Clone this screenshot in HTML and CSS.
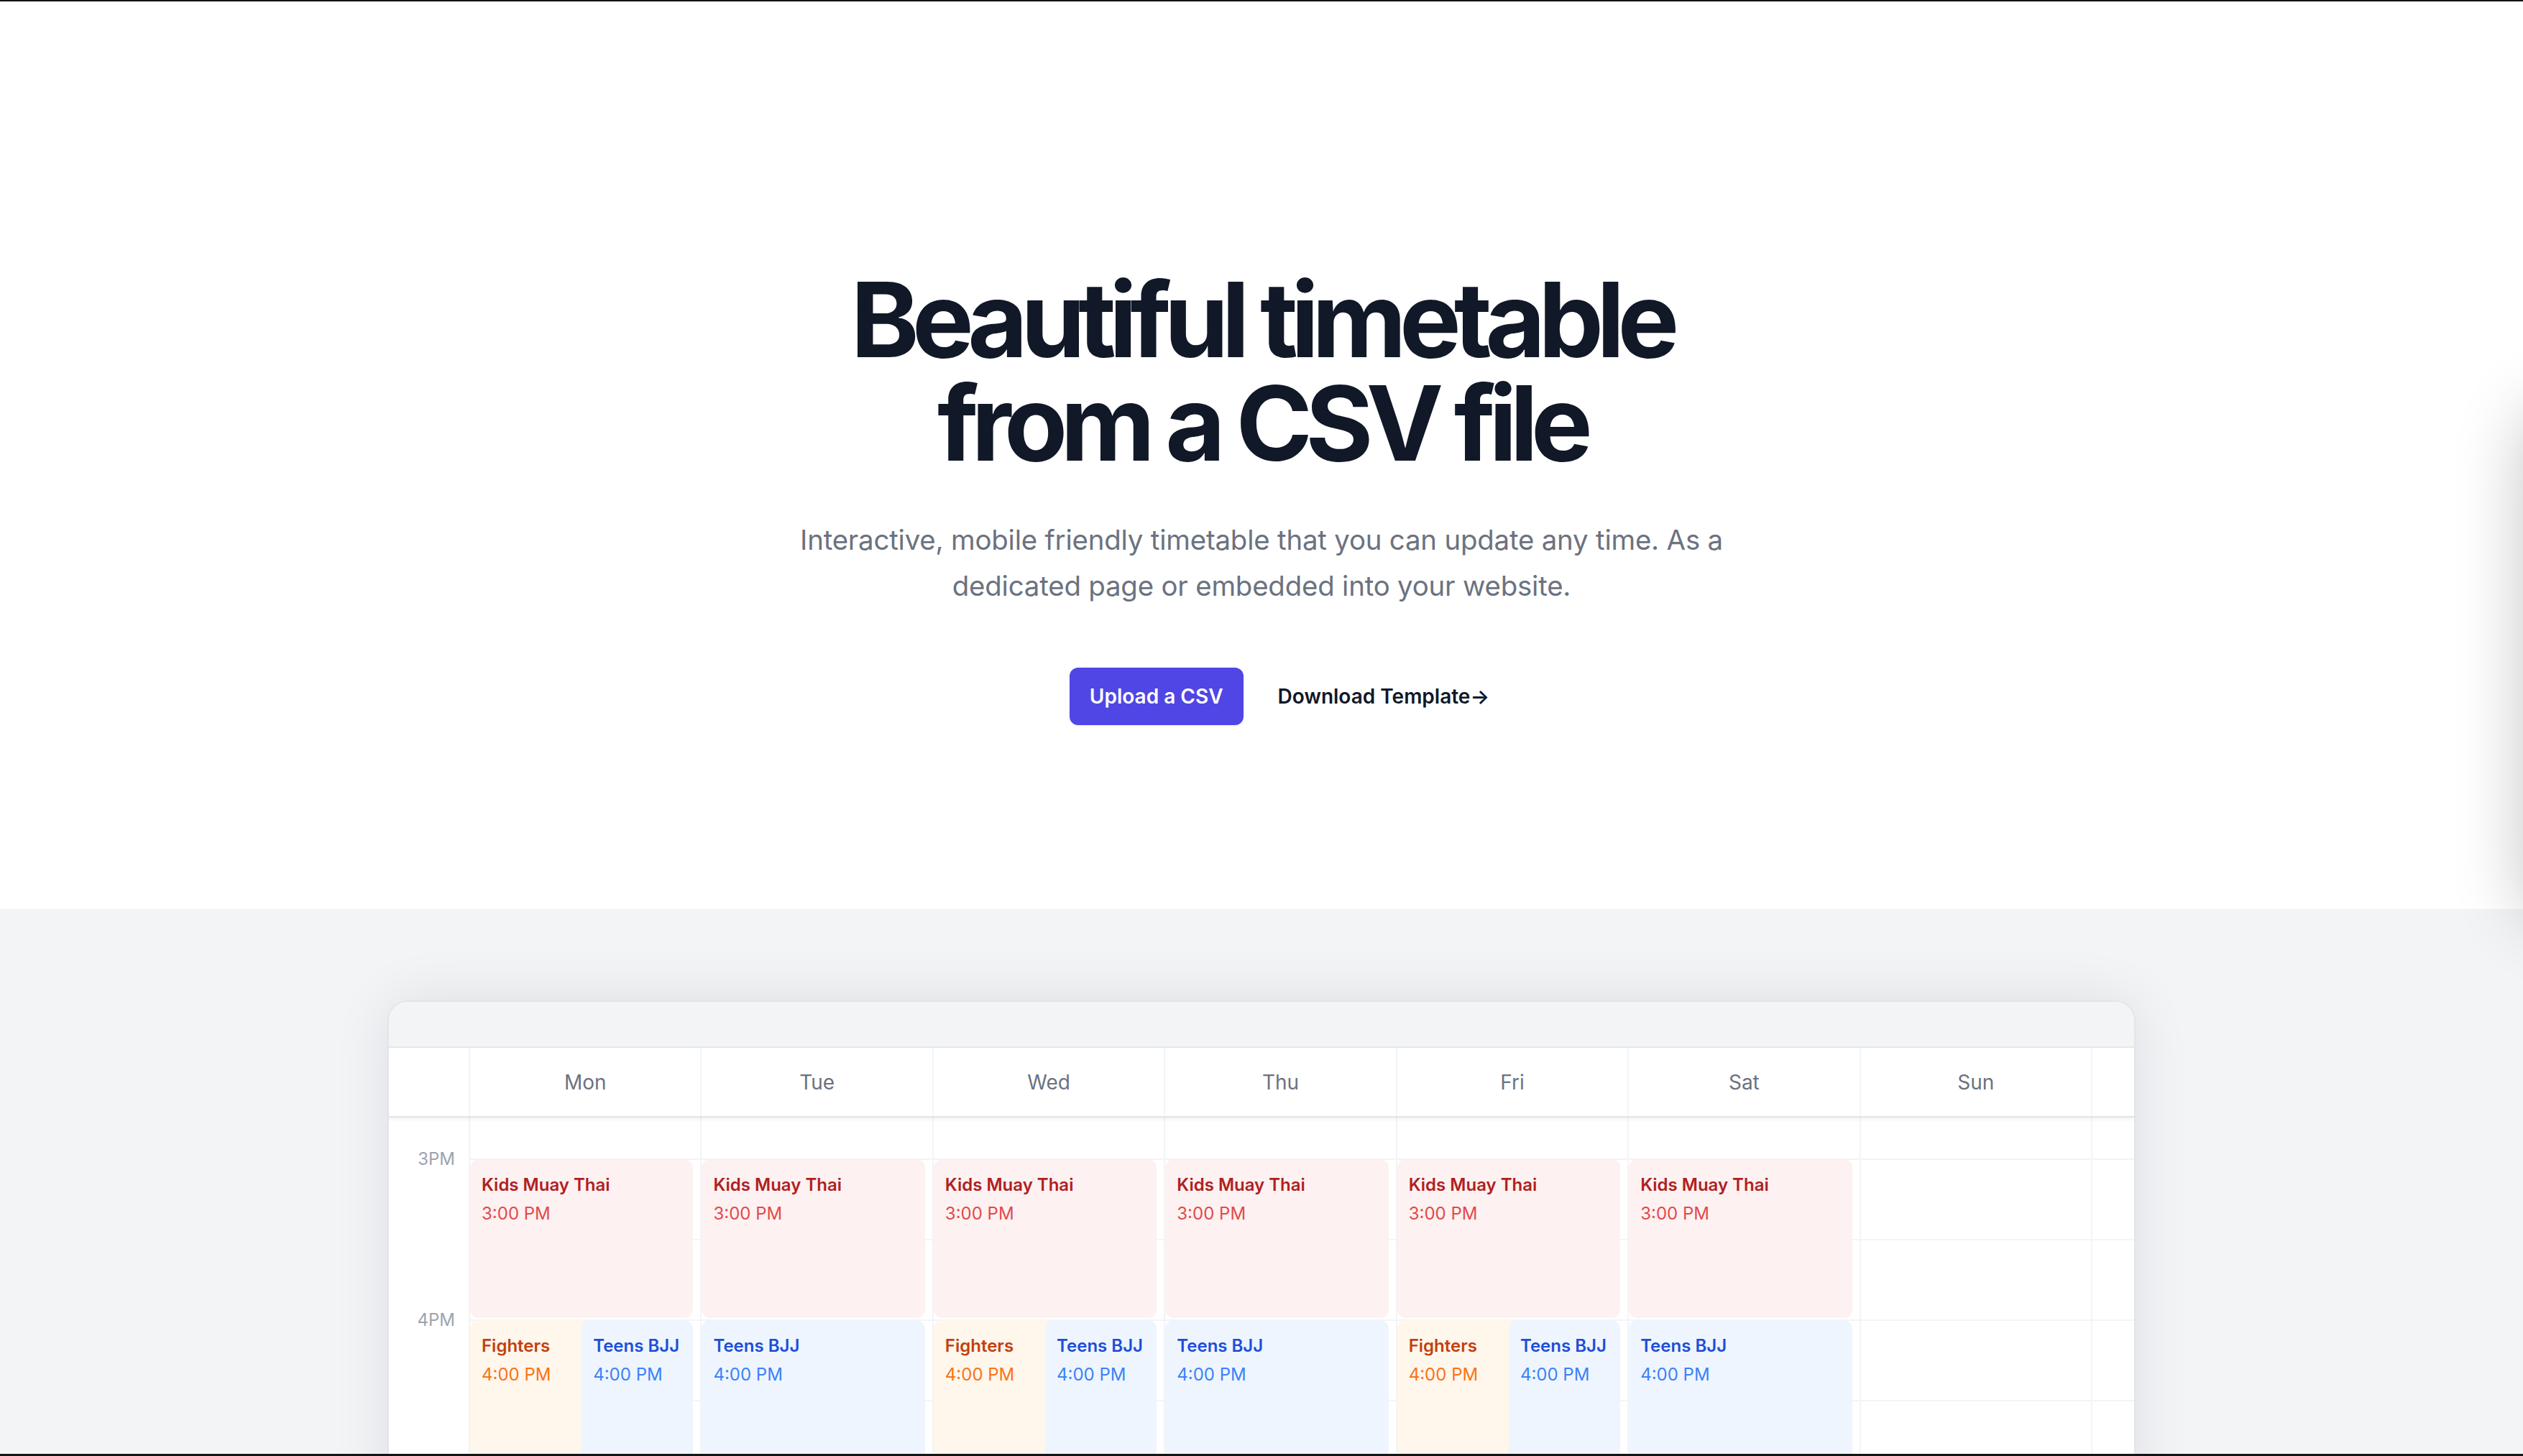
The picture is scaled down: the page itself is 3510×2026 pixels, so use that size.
FILE: index.html
```html
<!DOCTYPE html>
<html lang="en">
<head>
<meta charset="utf-8">
<title>Beautiful timetable from a CSV file</title>
<link rel="stylesheet" href="styles.css">
</head>
<body>
<div class="page">
  <div class="topline"></div>
  <section class="hero">
    <h1 class="title">Beautiful timetable<br>from a CSV file</h1>
    <p class="lead">Interactive, mobile friendly timetable that you can update any time. As a dedicated page or embedded into your website.</p>
    <div class="actions">
      <a class="btn" href="#">Upload a CSV</a>
      <a class="link" href="#">Download Template<span aria-hidden="true">→</span></a>
    </div>
  </section>
  <section class="demo">
    <div class="card">
      <div class="card-bar"></div>
      <div class="thead">
        <div class="th th-corner"></div>
        <div class="th">Mon</div>
        <div class="th">Tue</div>
        <div class="th">Wed</div>
        <div class="th">Thu</div>
        <div class="th">Fri</div>
        <div class="th">Sat</div>
        <div class="th">Sun</div>
        <div class="th"></div>
      </div>
      <div class="tbody">
        <div class="times">
          <div class="time-label r2">3PM</div>
          <div class="time-label r4">4PM</div>
        </div>

        <div class="day">
          <div class="slot r1"></div><div class="slot r2"></div><div class="slot r3"></div><div class="slot r4"></div><div class="slot r5"></div><div class="slot r6"></div>
          <div class="ev ev-3pm red"><div class="ev-title">Kids Muay Thai</div><div class="ev-time">3:00 PM</div></div>
          <div class="pair ev-4pm">
            <div class="ev orange under"><div class="ev-title">Fighters</div><div class="ev-time">4:00 PM</div></div>
            <div class="ev blue over"><div class="ev-title">Teens BJJ</div><div class="ev-time">4:00 PM</div></div>
          </div>
        </div>

        <div class="day">
          <div class="slot r1"></div><div class="slot r2"></div><div class="slot r3"></div><div class="slot r4"></div><div class="slot r5"></div><div class="slot r6"></div>
          <div class="ev ev-3pm red"><div class="ev-title">Kids Muay Thai</div><div class="ev-time">3:00 PM</div></div>
          <div class="ev ev-4pm blue"><div class="ev-title">Teens BJJ</div><div class="ev-time">4:00 PM</div></div>
        </div>

        <div class="day">
          <div class="slot r1"></div><div class="slot r2"></div><div class="slot r3"></div><div class="slot r4"></div><div class="slot r5"></div><div class="slot r6"></div>
          <div class="ev ev-3pm red"><div class="ev-title">Kids Muay Thai</div><div class="ev-time">3:00 PM</div></div>
          <div class="pair ev-4pm">
            <div class="ev orange under"><div class="ev-title">Fighters</div><div class="ev-time">4:00 PM</div></div>
            <div class="ev blue over"><div class="ev-title">Teens BJJ</div><div class="ev-time">4:00 PM</div></div>
          </div>
        </div>

        <div class="day">
          <div class="slot r1"></div><div class="slot r2"></div><div class="slot r3"></div><div class="slot r4"></div><div class="slot r5"></div><div class="slot r6"></div>
          <div class="ev ev-3pm red"><div class="ev-title">Kids Muay Thai</div><div class="ev-time">3:00 PM</div></div>
          <div class="ev ev-4pm blue"><div class="ev-title">Teens BJJ</div><div class="ev-time">4:00 PM</div></div>
        </div>

        <div class="day">
          <div class="slot r1"></div><div class="slot r2"></div><div class="slot r3"></div><div class="slot r4"></div><div class="slot r5"></div><div class="slot r6"></div>
          <div class="ev ev-3pm red"><div class="ev-title">Kids Muay Thai</div><div class="ev-time">3:00 PM</div></div>
          <div class="pair ev-4pm">
            <div class="ev orange under"><div class="ev-title">Fighters</div><div class="ev-time">4:00 PM</div></div>
            <div class="ev blue over"><div class="ev-title">Teens BJJ</div><div class="ev-time">4:00 PM</div></div>
          </div>
        </div>

        <div class="day">
          <div class="slot r1"></div><div class="slot r2"></div><div class="slot r3"></div><div class="slot r4"></div><div class="slot r5"></div><div class="slot r6"></div>
          <div class="ev ev-3pm red"><div class="ev-title">Kids Muay Thai</div><div class="ev-time">3:00 PM</div></div>
          <div class="ev ev-4pm blue"><div class="ev-title">Teens BJJ</div><div class="ev-time">4:00 PM</div></div>
        </div>

        <div class="day">
          <div class="slot r1"></div><div class="slot r2"></div><div class="slot r3"></div><div class="slot r4"></div><div class="slot r5"></div><div class="slot r6"></div>
        </div>

        <div class="day">
          <div class="slot r1"></div><div class="slot r2"></div><div class="slot r3"></div><div class="slot r4"></div><div class="slot r5"></div><div class="slot r6"></div>
        </div>
      </div>
    </div>
  </section>
  <div class="bottomline"></div>
  <div class="peek"></div>
</div>
</body>
</html>
```

FILE: styles.css
```css
* { box-sizing: border-box; margin: 0; padding: 0; }
html, body { width: 100%; height: 100%; }
body {
  font-family: Inter, "Noto Sans", "Liberation Sans", sans-serif;
  background: #ffffff;
  overflow: hidden;
}
.page {
  position: relative;
  height: 2026px;
  display: flex;
  flex-direction: column;
  overflow: hidden;
}
.topline { flex: none; height: 2px; background: #141414; }
.bottomline { flex: none; height: 3px; background: #141414; position: relative; z-index: 6; }

/* Hero */
.hero {
  flex: none;
  height: 1263px;
  padding-top: 371px;
  display: flex;
  flex-direction: column;
  align-items: center;
  background: #ffffff;
}
.title {
  font-size: 144px;
  line-height: 144px;
  font-weight: 700;
  letter-spacing: -0.068em;
  color: #111827;
  text-align: center;
}
.lead {
  margin-top: 58px;
  max-width: 1344px;
  font-size: 38.4px;
  line-height: 64px;
  letter-spacing: -0.005em;
  color: #6b7280;
  text-align: center;
}
.actions {
  margin-top: 82px;
  padding-left: 50px;
  display: flex;
  align-items: center;
  gap: 48px;
}
.btn {
  display: block;
  background: #4f46e5;
  color: #ffffff;
  font-size: 28px;
  line-height: 40px;
  font-weight: 600;
  padding: 20px 28px;
  border-radius: 12px;
  text-decoration: none;
  box-shadow: 0 2px 4px rgba(0, 0, 0, 0.05);
}
.link {
  font-size: 28px;
  line-height: 48px;
  font-weight: 600;
  color: #111827;
  text-decoration: none;
}

/* Demo */
.demo {
  flex: 1;
  min-height: 0;
  background: #f3f4f6;
  padding-top: 127px;
  overflow: hidden;
}
.card {
  width: 2432px;
  margin: 0 auto;
  background: #ffffff;
  border: 2px solid #e3e4e7;
  border-bottom: none;
  border-radius: 28px 28px 0 0;
  box-shadow: 0 0 80px rgba(17, 24, 39, 0.09);
  overflow: hidden;
}
.card-bar {
  height: 64px;
  background: #f3f4f6;
  border-bottom: 2px solid #e5e7eb;
}
.thead {
  position: relative;
  z-index: 2;
  display: grid;
  grid-template-columns: 111px repeat(7, 1fr) 60px;
  height: 97px;
  background: #ffffff;
  border-bottom: 2px solid #e2e3e6;
  box-shadow: 0 3px 6px rgba(0, 0, 0, 0.05);
}
.th {
  border-left: 2px solid #f3f4f6;
  display: flex;
  align-items: center;
  justify-content: center;
  font-size: 28px;
  line-height: 40px;
  color: #6b7280;
}
.th-corner { border-left: none; }

.tbody {
  display: grid;
  grid-template-columns: 111px repeat(7, 1fr) 60px;
}
.times {
  display: grid;
  grid-template-rows: 57px repeat(5, 112px);
}
.time-label {
  grid-column: 1;
  font-size: 24px;
  line-height: 32px;
  color: #9ca3af;
  text-align: right;
  padding-right: 19px;
  margin-top: -15px;
}
.day {
  display: grid;
  grid-template-rows: 57px repeat(5, 112px);
  grid-template-columns: 100%;
  border-left: 2px solid #f3f4f6;
}
.slot { grid-column: 1; border-top: 2px solid #f3f4f6; }
.slot.r1 { border-top: none; }
.r1 { grid-row: 1; }
.r2 { grid-row: 2; }
.r3 { grid-row: 3; }
.r4 { grid-row: 4; }
.r5 { grid-row: 5; }
.r6 { grid-row: 6; }

.ev {
  grid-column: 1;
  margin: 1px 10px 2px 0;
  border-radius: 12px;
  padding: 16px;
  font-size: 24px;
  line-height: 40px;
  min-width: 0;
}
.ev-3pm { grid-row: 2 / 4; }
.ev-4pm { grid-row: 4 / 6; }
.ev-title { font-weight: 600; white-space: nowrap; }
.ev-time { white-space: nowrap; }

.pair {
  grid-column: 1;
  margin: 1px 10px 2px 0;
  display: grid;
  grid-template-columns: 1fr 1fr;
  grid-template-rows: 100%;
  min-width: 0;
}
.pair .ev { margin: 0; grid-row: 1; }
.pair .under { grid-column: 1; margin-right: -14px; }
.pair .over { grid-column: 2; position: relative; z-index: 1; }

.red { background: #fdf1f1; }
.red .ev-title { color: #b0201f; }
.red .ev-time { color: #e24a49; }
.orange { background: #fff6ec; }
.orange .ev-title { color: #c2410c; }
.orange .ev-time { color: #f97316; }
.blue { background: #eef5ff; }
.blue .ev-title { color: #1d4ed8; }
.blue .ev-time { color: #3b82f6; }

/* Off-screen panel casting a shadow at the right edge */
.peek {
  position: absolute;
  left: 3514px;
  top: 570px;
  width: 600px;
  height: 710px;
  border-radius: 48px;
  background: #ffffff;
  box-shadow: 0 0 100px rgba(0, 0, 0, 0.24);
  z-index: 5;
}
```
